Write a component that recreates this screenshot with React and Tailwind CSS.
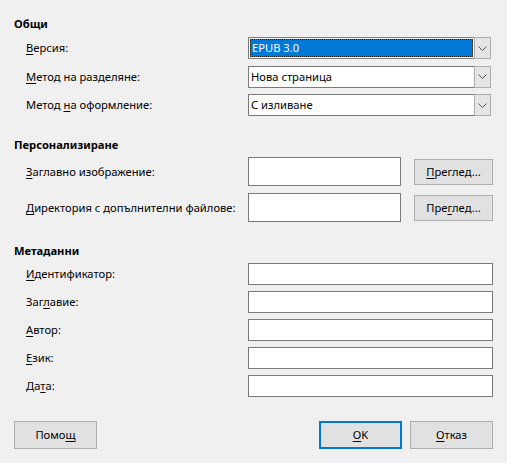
import { useState } from 'react'

function Chevron() {
  return (
    <svg width="9" height="5" viewBox="0 0 9 5" fill="none">
      <path d="M0.5 0.5 L4.5 4.5 L8.5 0.5" stroke="#555" strokeWidth="1" />
    </svg>
  )
}

function Label({ pre = '', u, post = '' }) {
  return (
    <span>
      {pre}
      <u className="underline-offset-2">{u}</u>
      {post}
    </span>
  )
}

function Combo({ value, selected }) {
  return (
    <div className="flex h-[22px] w-[243px]">
      <div className="flex-1 border border-[#7a7a7a] bg-white flex items-center">
        {selected ? (
          <div className="m-px flex-1 h-[18px] bg-[#0078d7] text-white flex items-center pl-px border border-dotted border-[#222]">
            {value}
          </div>
        ) : (
          <span className="pl-[2px]">{value}</span>
        )}
      </div>
      <div className="w-[17px] -ml-px border border-[#adadad] bg-[#e5e5e5] flex items-center justify-center">
        <Chevron />
      </div>
    </div>
  )
}

function Field({ className = '' }) {
  return <div className={`shrink-0 border border-[#7a7a7a] bg-white ${className}`} />
}

function Button({ children, primary, small, className = '' }) {
  const size = small ? 'h-[26px] w-[79px]' : 'h-[28px] w-[83px]'
  return (
    <button
      type="button"
      className={`shrink-0 ${size} bg-[#e1e1e1] flex items-center justify-center ${
        primary ? 'border-2 border-[#0078d7]' : 'border border-[#adadad]'
      } ${className}`}
    >
      {children}
    </button>
  )
}

export default function App() {
  const [general] = useState([
    { label: <Label u="В" post="ерсия:" />, value: 'EPUB 3.0', selected: true },
    { label: <Label u="М" post="етод на разделяне:" />, value: 'Нова страница' },
    { label: <Label pre="Метод " u="н" post="а оформление:" />, value: 'С изливане' },
  ])

  const meta = [
    <Label u="И" post="дентификатор:" />,
    <Label pre="Заг" u="л" post="авие:" />,
    <Label u="А" post="втор:" />,
    <Label u="Е" post="зик:" />,
    <Label pre="Да" u="т" post="а:" />,
  ]

  return (
    <div
      className="w-[507px] h-[463px] bg-[#f0f0f0] text-[11.2px] leading-[16px] text-black px-[14px] pt-[16px]"
      style={{ fontFamily: '"Noto Sans", "Open Sans", sans-serif' }}
    >
      <div className="font-bold">Общи</div>
      <div className="mt-[5px] flex flex-col gap-[6.5px]">
        {general.map((row, i) => (
          <div key={i} className="flex items-center">
            <div className="w-[234px] shrink-0 pl-[12px] whitespace-nowrap">{row.label}</div>
            <Combo value={row.value} selected={row.selected} />
          </div>
        ))}
      </div>

      <div className="font-bold mt-[21px]">Персонализиране</div>
      <div className="mt-[4px] flex flex-col gap-[7px]">
        <div className="flex items-center h-[29px]">
          <div className="w-[234px] shrink-0 pl-[12px] whitespace-nowrap">
            <Label u="З" post="аглавно изображение:" />
          </div>
          <Field className="w-[153px] h-[29px]" />
          <Button small className="ml-[13px]">
            <Label u="П" post="реглед..." />
          </Button>
        </div>
        <div className="flex items-center h-[29px]">
          <div className="w-[234px] shrink-0 pl-[12px] whitespace-nowrap">
            <Label u="Д" post="иректория с допълнителни файлове:" />
          </div>
          <Field className="w-[153px] h-[29px]" />
          <Button small className="ml-[13px]">
            <Label pre="Пре" u="г" post="лед..." />
          </Button>
        </div>
      </div>

      <div className="font-bold mt-[21px]">Метаданни</div>
      <div className="mt-[4px] flex flex-col gap-[6px]">
        {meta.map((label, i) => (
          <div key={i} className="flex items-center">
            <div className="w-[234px] shrink-0 pl-[12px] whitespace-nowrap">{label}</div>
            <Field className="w-[245px] h-[22px]" />
          </div>
        ))}
      </div>

      <div className="mt-[24px] flex items-center">
        <Button>
          <Label pre="Помо" u="щ" />
        </Button>
        <div className="flex-1" />
        <Button primary>
          <Label u="О" post="K" />
        </Button>
        <Button className="ml-[8px]">
          <Label u="О" post="тказ" />
        </Button>
      </div>
    </div>
  )
}
